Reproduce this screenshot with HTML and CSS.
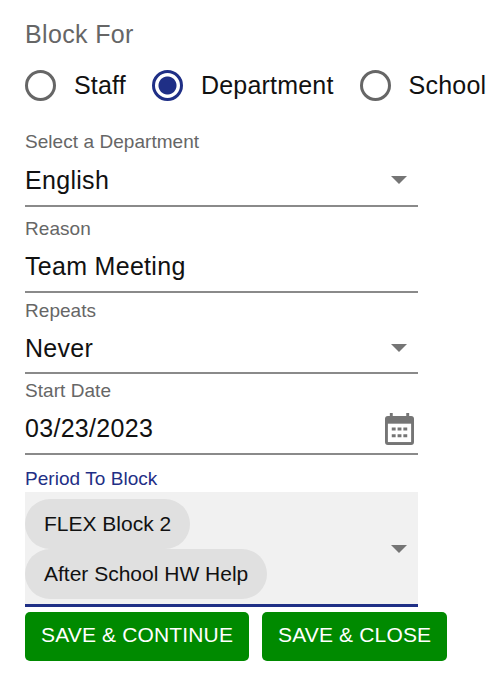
FILE: index.html
```html
<!DOCTYPE html>
<html lang="en">
<head>
    <meta charset="UTF-8">
    <title>Block For</title>
    <link rel="stylesheet" href="styles.css">
</head>
<body>
    <form class="block-form">
        <div class="group-label">Block For</div>
        <div class="radio-row">
            <label class="radio"><span class="radio-circle"></span>Staff</label>
            <label class="radio selected"><span class="radio-circle"></span>Department</label>
            <label class="radio"><span class="radio-circle"></span>School</label>
        </div>

        <div class="field field-dept">
            <div class="field-label">Select a Department</div>
            <div class="field-value">English<span class="arrow"></span></div>
        </div>
        <div class="field field-reason">
            <div class="field-label">Reason</div>
            <div class="field-value">Team Meeting</div>
        </div>
        <div class="field field-repeats">
            <div class="field-label">Repeats</div>
            <div class="field-value">Never<span class="arrow"></span></div>
        </div>
        <div class="field field-date">
            <div class="field-label">Start Date</div>
            <div class="field-value">03/23/2023
                <svg class="calendar" viewBox="0 0 30 33" width="29" height="32">
                    <path fill="#757575" d="M5 0h3v3h14V0h3v3h2a3 3 0 0 1 3 3v24a3 3 0 0 1-3 3H3a3 3 0 0 1-3-3V6a3 3 0 0 1 3-3h2z"/>
                    <rect x="3" y="11" width="24" height="19" fill="#fff"/>
                    <path fill="#757575" d="M7 15h4v3H7zM13 15h4v3h-4zM19 15h4v3h-4zM7 22h4v3H7zM13 22h4v3h-4zM19 22h4v3h-4z"/>
                </svg>
            </div>
        </div>

        <div class="field-label period-label">Period To Block</div>
        <div class="period-select">
            <div class="chips">
                <span class="chip">FLEX Block 2</span>
                <span class="chip">After School HW Help</span>
            </div>
            <span class="arrow"></span>
        </div>

        <div class="actions">
            <button type="button" class="save-btn">SAVE &amp; CONTINUE</button>
            <button type="button" class="save-btn">SAVE &amp; CLOSE</button>
        </div>
    </form>
</body>
</html>
```

FILE: styles.css
```css
body {
    margin: 0;
    background-color: #fff;
    font-family: 'Liberation Sans', Arial, sans-serif;
    color: #111;
}
.block-form {
    width: 393px;
    padding: 19px 0 0 25px;
}
.group-label {
    font-size: 25px;
    line-height: 30px;
    color: #666;
    letter-spacing: 0.35px;
}
.radio-row {
    display: flex;
    gap: 26px;
    margin-top: 20px;
    width: 475px;
}
.radio {
    display: flex;
    align-items: center;
    gap: 18px;
    height: 32px;
    font-size: 25px;
    letter-spacing: 0.2px;
}
.radio-circle {
    box-sizing: border-box;
    width: 31px;
    height: 31px;
    border: 3px solid #666;
    border-radius: 50%;
}
.radio.selected .radio-circle {
    border-color: #1f2f86;
    background: radial-gradient(circle, #1f2f86 0 8.5px, #fff 9.5px);
}
.field {
    border-bottom: 2px solid #8a8a8a;
}
.field-dept {
    margin-top: 29px;
}
.field-reason {
    margin-top: 10px;
}
.field-reason .field-value {
    height: 49px;
}
.field-repeats {
    margin-top: 6px;
}
.field-repeats .field-value {
    height: 48px;
}
.field-date {
    margin-top: 5px;
}
.field-date .field-value {
    height: 49px;
}
.field-label {
    margin-bottom: 1px;
    font-size: 19px;
    line-height: 24px;
    color: #666;
    letter-spacing: 0.05px;
}
.field-value {
    display: flex;
    justify-content: space-between;
    align-items: center;
    height: 50px;
    font-size: 25px;
    letter-spacing: 0.3px;
}
.arrow {
    width: 0;
    height: 0;
    margin-right: 11px;
    border-left: 8px solid transparent;
    border-right: 8px solid transparent;
    border-top: 8px solid #757575;
}
.calendar {
    margin-right: 4px;
}
.period-label {
    margin-top: 12px;
    color: #1f2f86;
}
.period-select {
    display: flex;
    align-items: center;
    justify-content: space-between;
    box-sizing: border-box;
    height: 115px;
    padding-top: 2px;
    background-color: #f1f1f1;
    border-bottom: 3px solid #1f2f86;
}
.chips {
    display: flex;
    flex-direction: column;
    align-items: flex-start;
}
.chip {
    height: 50px;
    padding: 0 19px;
    line-height: 50px;
    font-size: 21px;
    letter-spacing: 0;
    background-color: #e0e0e0;
    border-radius: 25px;
}
.actions {
    display: flex;
    gap: 13px;
    margin-top: 5px;
    width: 450px;
}
.save-btn {
    height: 49px;
    padding: 0 16px 3px;
    border: none;
    border-radius: 5px;
    background-color: #008a00;
    color: #fff;
    font-family: inherit;
    font-size: 21px;
    letter-spacing: 0.15px;
}
```
